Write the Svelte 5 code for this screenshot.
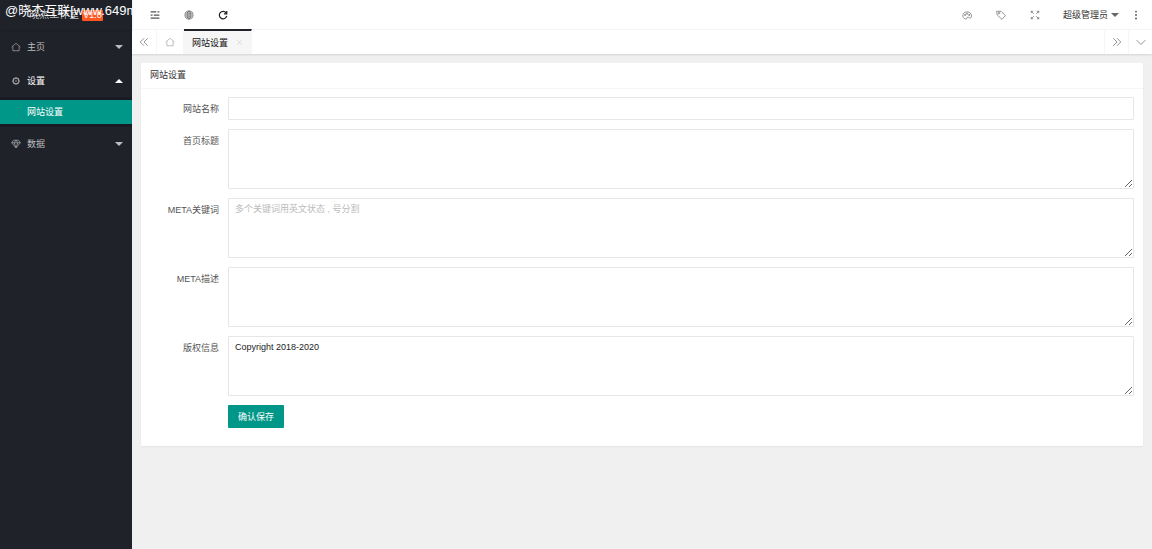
<script>
  let siteName = $state("");
  let title = $state("");
  let keywords = $state("");
  let description = $state("");
  let copyright = $state("Copyright 2018-2020");
</script>

<svelte:head>
  <title>网站设置</title>
</svelte:head>

<div class="layout">
  <aside class="side">
    <div class="logo">
      <span>晓杰工作室</span>
      <span class="badge">V1.0</span>
      <div class="watermark">@晓杰互联[www.649m</div>
    </div>
    <nav>
      <a class="item" href="#home">
        <svg viewBox="0 0 16 16"><path d="M1 8 8 2l7 6M3 7v7h10V7" /></svg>
        <span>主页</span>
        <i class="caret"></i>
      </a>
      <a class="item open" href="#settings">
        <svg viewBox="0 0 16 16" class="gear">
          <circle cx="8" cy="8" r="4.500" stroke-width="2" />
          <circle cx="8" cy="8" r="1" />
          <path d="M8 2v2M8 12v2M2 8h2M12 8h2M4 4l1 1M11 11l1 1M12 4l-1 1M4 12l1-1" stroke-width="2" />
        </svg>
        <span>设置</span>
        <i class="caret up"></i>
      </a>
      <div class="children">
        <a href="#website">网站设置</a>
      </div>
      <a class="item" href="#data">
        <svg viewBox="0 0 16 16"><path d="M4 2h8l3 4-7 8-7-8zM1 6h14M5 6l3 8 3-8M5 6l3-4 3 4" /></svg>
        <span>数据</span>
        <i class="caret"></i>
      </a>
    </nav>
  </aside>

  <div class="body">
    <header class="header">
      <button class="tool" aria-label="侧边伸缩">
        <svg viewBox="0 0 16 16" stroke-width="2"><path d="M1 3h9M12 3h3M1 8h3M6 8h9M1 13h14" /></svg>
      </button>
      <button class="tool" aria-label="前台">
        <svg viewBox="0 0 16 16">
          <circle cx="8" cy="8" r="6.500" />
          <ellipse cx="8" cy="8" rx="3" ry="6.500" />
          <path d="M8 1.500v13M1.500 8h13M2.500 5h11M2.500 11h11" />
        </svg>
      </button>
      <button class="tool dark" aria-label="刷新">
        <svg viewBox="0 0 16 16" stroke-width="2"><path d="M13 4.500A6 6 0 1 0 14 9.500M14 1.500V6H9.500" /></svg>
      </button>
      <div class="spacer"></div>
      <button class="tool" aria-label="主题">
        <svg viewBox="0 0 16 16">
          <path d="M2 12C0 7 3 3 8 3c5 0 8 4 7 8-1 3-3 2-4 1s-3-1-3 1-4 2-6-1z" />
          <circle cx="5" cy="8" r="1" /><circle cx="8" cy="6" r="1" /><circle cx="11.500" cy="8" r="1" />
        </svg>
      </button>
      <button class="tool" aria-label="便签">
        <svg viewBox="0 0 16 16"><path d="M1 2l7 0 7 7-5.500 6-7.500-7z" /><circle cx="5" cy="5" r="1.200" /></svg>
      </button>
      <button class="tool" aria-label="全屏">
        <svg viewBox="0 0 16 16"><path d="M2 5V2h3M2 2l4 4M11 2h3v3M14 2l-4 4M2 11v3h3M2 14l4-4M11 14h3v-3M14 14l-4-4" /></svg>
      </button>
      <button class="user">超级管理员 <i class="caret"></i></button>
      <button class="tool more" aria-label="更多">
        <svg viewBox="0 0 16 16" class="dots"><circle cx="8" cy="2.500" r="1.500" /><circle cx="8" cy="8" r="1.500" /><circle cx="8" cy="13.500" r="1.500" /></svg>
      </button>
    </header>

    <div class="tabs">
      <button class="control" aria-label="向左">
        <svg viewBox="0 0 16 16"><path d="M8 2 2 8l6 6M14 2 8 8l6 6" /></svg>
      </button>
      <a class="tab home" href="#home" aria-label="主页">
        <svg viewBox="0 0 16 16"><path d="M1 8 8 2l7 6M3 7v7h10V7" /></svg>
      </a>
      <div class="tab active">
        <a href="#website">网站设置</a>
        <button class="close" aria-label="关闭">
          <svg viewBox="0 0 16 16"><path d="m3 3 10 10M13 3 3 13" /></svg>
        </button>
      </div>
      <div class="spacer"></div>
      <button class="control right" aria-label="向右">
        <svg viewBox="0 0 16 16"><path d="m2 2 6 6-6 6M8 2l6 6-6 6" /></svg>
      </button>
      <button class="control right" aria-label="标签操作">
        <svg viewBox="0 0 16 16"><path d="m1 5 7 7 7-7" /></svg>
      </button>
    </div>

    <main class="card">
      <h1>网站设置</h1>
      <form onsubmit={(e) => e.preventDefault()}>
        <label for="name">网站名称</label>
        <input id="name" type="text" bind:value={siteName} />

        <label for="title">首页标题</label>
        <textarea id="title" bind:value={title}></textarea>

        <label for="keywords">META关键词</label>
        <textarea id="keywords" placeholder="多个关键词用英文状态 , 号分割" bind:value={keywords}></textarea>

        <label for="description">META描述</label>
        <textarea id="description" bind:value={description}></textarea>

        <label for="copyright">版权信息</label>
        <textarea id="copyright" bind:value={copyright}></textarea>

        <button class="submit" type="submit">确认保存</button>
      </form>
    </main>
  </div>
</div>

<style>
  :global(body) {
    background: #f0f0f0;
  }
  .layout {
    display: flex;
    min-height: 100vh;
    font: 9px/16px "Liberation Sans", "Noto Sans CJK SC", sans-serif;
    color: #555;
  }
  .layout * {
    box-sizing: border-box;
  }
  a {
    color: inherit;
    text-decoration: none;
  }
  button {
    display: flex;
    align-items: center;
    justify-content: center;
    padding: 0;
    border: 0;
    background: none;
    color: inherit;
    font: inherit;
    cursor: pointer;
  }
  svg {
    width: 10px;
    height: 10px;
    fill: none;
    stroke: currentColor;
  }
  .spacer {
    flex: 1;
  }
  .caret {
    border: 4px solid transparent;
    border-top-color: currentColor;
    border-bottom: 0;
  }
  .caret.up {
    border-top: 0;
    border-bottom: 4px solid currentColor;
  }

  .side {
    flex: 0 0 132px;
    background: #20222a;
    color: #bcbdbf;
  }
  .logo {
    position: relative;
    display: flex;
    align-items: center;
    justify-content: center;
    gap: 3px;
    height: 30px;
    overflow: hidden;
    font-size: 10px;
    box-shadow: 0 1px 2px rgba(0, 0, 0, 0.15);
  }
  .badge {
    padding: 0 1px;
    border-radius: 1px;
    background: #ff5722;
    color: #fff;
    font-size: 9px;
    line-height: 11px;
  }
  .watermark {
    position: absolute;
    top: 0;
    left: 5px;
    color: #fff;
    font-size: 13px;
    line-height: 22px;
    white-space: nowrap;
  }
  .item {
    display: flex;
    align-items: center;
    gap: 6px;
    height: 34px;
    padding: 0 9px 0 11px;
  }
  .item .caret {
    margin-left: auto;
  }
  .item.open {
    height: 33px;
    color: #fff;
  }
  .gear {
    color: #999;
  }
  .children {
    padding: 3px 0;
    background: #191b22;
  }
  .children a {
    display: block;
    padding-left: 27px;
    background: #009688;
    color: #fff;
    line-height: 24px;
  }

  .body {
    flex: 1;
    min-width: 0;
  }
  .header {
    display: flex;
    height: 30px;
    padding: 0 6px;
    border-bottom: 1px solid #f6f6f6;
    background: #fff;
  }
  .tool {
    width: 34px;
  }
  .dark {
    color: #222;
  }
  .user {
    gap: 3px;
    padding: 0 7px 0 11px;
    color: #333;
  }
  .user .caret {
    color: #666;
  }
  .more {
    width: 20px;
  }
  .dots {
    fill: currentColor;
    stroke: none;
  }

  .tabs {
    display: flex;
    height: 24px;
    background: #fff;
    box-shadow: 0 1px 2px rgba(0, 0, 0, 0.12);
  }
  .control {
    width: 25px;
    border-right: 1px solid #f6f6f6;
  }
  .control.right {
    width: 24px;
    border-right: 0;
    border-left: 1px solid #f6f6f6;
  }
  .tab {
    display: flex;
    align-items: center;
    padding: 0 8px;
    border-right: 1px solid #f6f6f6;
  }
  .home {
    color: #999;
  }
  .active {
    gap: 8px;
    border-top: 2px solid #20222a;
    margin-top: -1px;
    background: #f6f6f6;
    color: #111;
  }
  .close {
    color: #bbb;
  }
  .close svg {
    width: 7px;
    height: 7px;
  }

  .card {
    margin: 9px;
    border-radius: 1px;
    background: #fff;
    box-shadow: 0 1px 2px rgba(0, 0, 0, 0.05);
  }
  h1 {
    margin: 0;
    padding: 0 9px;
    border-bottom: 1px solid #f6f6f6;
    color: #333;
    font-size: 9px;
    font-weight: 400;
    line-height: 25px;
  }
  form {
    display: grid;
    grid-template-columns: 69px 1fr;
    gap: 9px;
    padding: 8px 9px 18px;
  }
  label {
    padding-top: 4px;
    text-align: right;
    white-space: nowrap;
  }
  input,
  textarea {
    display: block;
    width: 100%;
    height: 60px;
    margin: 0;
    padding: 2px 6px;
    border: 1px solid #e6e6e6;
    border-radius: 1px;
    background: #fff;
    color: #222;
    font: inherit;
    resize: vertical;
  }
  input {
    height: 23px;
  }
  ::placeholder {
    color: #bbb;
  }
  .submit {
    grid-column: 2;
    justify-self: start;
    height: 23px;
    padding: 0 10px;
    border-radius: 1px;
    background: #009688;
    color: #fff;
  }
</style>
